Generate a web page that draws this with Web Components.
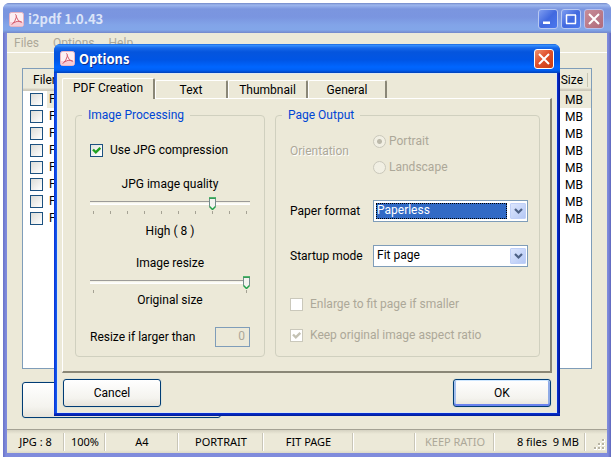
<!DOCTYPE html>
<html lang="en">
<head>
<meta charset="utf-8">
<title>i2pdf 1.0.43</title>
<style>
html,body{margin:0;background:#fff}
body{font:12px/14px Roboto,"Liberation Sans",sans-serif;color:#000;--face:#ece9d8;--dim:#aca899;--edge:#7f9db9}
</style>
</head>
<body>
<i2-app></i2-app>
<script>
function define(name, html, setup) {
  const t = document.createElement('template');
  t.innerHTML = '<style>*{box-sizing:border-box}:host{box-sizing:border-box}button,input,select{font:inherit;color:inherit;margin:0}</style>' + html;
  customElements.define(name, class extends HTMLElement {
    constructor() {
      super();
      this.attachShadow({mode: 'open'}).append(t.content.cloneNode(true));
    }
    connectedCallback() {
      if (!this.ready) { this.ready = true; if (setup) setup(this, this.shadowRoot); }
    }
  });
}

define('pdf-logo', `<style>:host{display:block;width:15px;height:15px;flex:none}svg{display:block}</style>
<svg width="15" height="15" viewBox="0 0 15 15" aria-hidden="true"><rect x=".5" y=".5" width="14" height="14" rx="2" fill="#fdeff2" stroke="#e9b4c1"/><path d="M1 10h13v3a1 1 0 0 1-1 1H2a1 1 0 0 1-1-1z" fill="#f7ccd6"/><path d="M6.600 2.500q1 0 .8 2.500Q6.500 9.300 3 12.500M7.300 5q1.200 4.200 5 5.500M4.300 10.800q3.500-2.500 8-1.200" fill="none" stroke="#d65f70" stroke-width="1" stroke-linecap="round"/></svg>`);

define('title-button', `<style>:host{display:block;flex:none}
button{display:grid;place-items:center;width:20px;height:20px;padding:0;border:1px solid #fff;border-radius:3px;background:linear-gradient(135deg,#f0916f,#e0502c 45%,#c63c14)}
:host([tone=blue]) button{border-color:#b7c8f2;background:linear-gradient(135deg,#7e9df0,#4169df 50%,#4a78ee)}
:host([tone=dull]) button{border-color:#b7c0ee;background:linear-gradient(135deg,#c78d98,#b06a7c)}
svg{display:block}path{fill:none;stroke:#fff;stroke-width:2}</style>
<button type="button"><svg width="14" height="14" viewBox="0 0 14 14"><path/></svg></button>`, (h, r) => {
  const k = h.getAttribute('kind');
  r.querySelector('path').setAttribute('d', {min: 'M2 11h7M2 10.500h7', max: 'M2 3h10M2.500 3v8.500M11.500 3v8.500M2 11.500h10', close: 'M2 2l10 10M12 2l-10 10'}[k]);
  r.querySelector('button').setAttribute('aria-label', {min: 'Minimize', max: 'Maximize', close: 'Close'}[k]);
  if (k === 'max') r.querySelector('path').style.strokeWidth = '1.500';
});

define('title-bar', `<style>:host{display:flex;align-items:center;gap:4px;height:29px;padding:0 6px;color:#fff;font:bold 13px/16px "Noto Sans CJK JP",Verdana,sans-serif;background:linear-gradient(#0a53cf 0,#3a94ff 1px,#1668ea 4px,#0555dd 8px,#0055e5 16px,#0066ff 23px,#0060f5 26px,#0040b8 29px);border-radius:6px 6px 0 0;text-shadow:1px 1px #10308c}
:host([inactive]){height:30px;padding:2px 7px 0 6px;color:#dbe4f8;text-shadow:none;background:linear-gradient(#7288c8 0,#9db7ee 2px,#7b96df 6px,#7a95e0 14px,#82a4e8 22px,#82a6e9 27px,#7387ca 30px)}
.t{flex:1}.b{display:flex;gap:3px}</style>
<pdf-logo></pdf-logo><span class="t"><slot></slot></span><div class="b"><slot name="buttons"></slot></div>`);

define('menu-bar', `<style>:host{display:flex;height:20px;align-items:center;gap:14px;padding:0 7px;color:var(--dim);border-bottom:1px solid #fff}
button{border:0;background:none;padding:0}</style>
<button type="button">Files</button><button type="button">Options</button><button type="button">Help</button>`);

define('check-box', `<style>:host{display:block}
label{display:flex;align-items:center;gap:7px}
input{appearance:none;width:13px;height:13px;flex:none;border:1px solid #1c5180;background:linear-gradient(135deg,#dcdcd7,#fff)}
input:checked{background:url("data:image/svg+xml,%3Csvg xmlns='http://www.w3.org/2000/svg' width='11' height='11'%3E%3Cpath d='M2 4.500l2.800 2.800 4.500-4.500' fill='none' stroke='%2321a121' stroke-width='2.400'/%3E%3C/svg%3E"),linear-gradient(135deg,#e4e4df,#fff)}
input:disabled{border-color:#cac8bb;background:#fff}
input:checked:disabled{background:url("data:image/svg+xml,%3Csvg xmlns='http://www.w3.org/2000/svg' width='11' height='11'%3E%3Cpath d='M2 4.500l2.800 2.800 4.500-4.500' fill='none' stroke='%23c4c2b4' stroke-width='2.400'/%3E%3C/svg%3E") #fff}
:host([disabled]){color:var(--dim)}</style>
<label><input type="checkbox"><span><slot></slot></span></label>`, (h, r) => {
  const i = r.querySelector('input');
  i.checked = h.hasAttribute('checked');
  i.disabled = h.hasAttribute('disabled');
});

define('file-table', `<style>:host{display:block;flex:1;border:1px solid var(--edge);background:#fff}
table{width:100%;border-collapse:collapse;table-layout:fixed}
th{height:22px;padding:0;font-weight:normal;text-align:left;background:linear-gradient(#ebeadb 19px,#d6d2c2 20px,#cbc7b8 22px)}
th:first-child{padding-left:10px}
th:last-child,td:last-child{width:80px;text-align:right;padding:0 8px 0 0}
th:last-child{background:linear-gradient(#c7c5b2,#c7c5b2) calc(100% - 3px) 4px/1px 14px no-repeat,linear-gradient(#ebeadb 19px,#d6d2c2 20px,#cbc7b8 22px)}
td{height:17px;padding:0 0 0 7px}
td label{display:flex;align-items:center;gap:4px}
td input{appearance:none;width:13px;height:13px;border:1px solid #1c5180;background:linear-gradient(135deg,#dcdcd7,#fff)}
td span{flex:1;line-height:17px;padding-left:2px}
tr.on span,tr.on td:last-child{background:#ece9d8}</style>
<table><thead><tr><th>Filen</th><th>Size</th></tr></thead><tbody></tbody></table>`, (h, r) => {
  const b = r.querySelector('tbody');
  for (let n = 0; n < 8; n++) {
    const tr = b.insertRow();
    if (!n) tr.className = 'on';
    tr.innerHTML = '<td><label><input type="checkbox"><span>F</span></label></td><td>MB</td>';
  }
});

define('status-bar', `<style>:host{display:grid;grid-template-columns:58fr 41fr 73fr 85fr 90fr 62fr 79fr 91fr 21fr;height:24px;padding:3px 0 2px;border-top:1px solid #a5a294;font:11px/18px "Noto Sans","Open Sans",Tahoma,sans-serif;background:linear-gradient(#d5d2c2,var(--face) 4px,var(--face) 20px,#dcd9c8)}
span{text-align:center;white-space:nowrap;border-right:1px solid #fff;box-shadow:inset -1px 0 #c9c6b7}
.d{color:var(--dim)}.r{text-align:right;padding-right:6px;white-space:pre}
svg{align-self:end;justify-self:end;display:block}</style>
<span>JPG : 8</span><span>100%</span><span>A4</span><span>PORTRAIT</span><span>FIT PAGE</span><span></span><span class="d">KEEP RATIO</span><span class="r">8 files  9 MB</span>
<svg width="13" height="13" viewBox="0 0 13 13" aria-hidden="true"><path d="M8 1h3v3H8zM4 5h3v3H4zM8 5h3v3H8zM0 9h3v3H0zM4 9h3v3H4zM8 9h3v3H8z" fill="#fff"/><path d="M8 1h2v2H8zM4 5h2v2H4zM8 5h2v2H8zM0 9h2v2H0zM4 9h2v2H4zM8 9h2v2H8z" fill="#b8b4a3"/></svg>`);

define('push-button', `<style>:host{display:block}
button{display:block;width:100%;height:100%;min-height:28px;padding:0;border:1px solid #003c74;border-radius:3px;background:linear-gradient(#fff,#f4f3ee 70%,#e6e3da);box-shadow:0 0 0 1px #dfe3d8}
:host([default]) button{box-shadow:0 0 0 1px #dfe3d8,inset 0 1px #cee7ff,inset 0 -2px #6982ee,inset 2px 0 #a5c0ee,inset -2px 0 #8fabe6}</style>
<button type="button"><slot></slot></button>`, (h, r) => {
  if (h.title) r.querySelector('button').setAttribute('aria-label', h.title);
});

define('group-box', `<style>:host{display:grid}
fieldset{min-width:0;margin:0;padding:0 11px 9px 14px;border:1px solid #d0d0bf;border-radius:4px}
legend{margin-left:-8px;padding:0 6px;line-height:14px;color:#0046d5}</style>
<fieldset><legend></legend><slot></slot></fieldset>`, (h, r) => {
  r.querySelector('legend').textContent = h.getAttribute('label');
});

define('track-bar', `<style>:host{display:grid;justify-items:center}
label,output{line-height:14px}
output{margin-top:10px}
input{appearance:none;width:100%;height:14px;margin-top:5px;background:linear-gradient(#9d9c99 1px,#efedde 1px,#fff 3px) 0 5px/100% 4px no-repeat;border-radius:2px}
input::-webkit-slider-thumb{appearance:none;width:7px;height:13px;background:url("data:image/svg+xml,%3Csvg xmlns='http://www.w3.org/2000/svg' width='7' height='13'%3E%3Cpath d='M.5 1.500h6v8l-3 3-3-3z' fill='%23f3f3ef' stroke='%23748c8c'/%3E%3Cpath d='M0 1h7M.5 9.500l3 3 3-3' fill='none' stroke='%2321a14a' stroke-width='1.500'/%3E%3C/svg%3E")}
.ticks{display:flex;justify-content:space-between;width:100%;padding:0 3px;height:3px;margin-top:1px}
.ticks i{width:1px;background:#a5a294}
:host([compact]) output{margin-top:0}</style>
<label for="r"></label><input id="r" type="range"><div class="ticks"></div><output for="r"></output>`, (h, r) => {
  const i = r.querySelector('input');
  i.min = h.getAttribute('min'); i.max = h.getAttribute('max'); i.value = h.getAttribute('value');
  r.querySelector('label').textContent = h.getAttribute('label');
  r.querySelector('output').textContent = h.getAttribute('text');
  for (let n = +i.min; n <= +i.max; n++) r.querySelector('.ticks').append(document.createElement('i'));
});

define('combo-field', `<style>:host{display:grid;grid-template-columns:83px 1fr;align-items:center}
.box{display:flex;gap:3px;height:22px;padding:2px 1px 2px 2px;border:1px solid var(--edge);background:#fff}
select{appearance:none;flex:1;min-width:0;border:0;padding:0 0 2px 1px;background:#fff;outline:0;line-height:14px}
:host([active]) select{background:#316ac5;color:#fff;outline:1px dotted #000;outline-offset:-1px}
button{width:16px;padding:0;border:1px solid #c0d0f8;border-radius:1px;background:linear-gradient(135deg,#dce6fd,#b5c8f5);display:grid;place-items:center}
svg{display:block}</style>
<label for="s"></label><div class="box"><select id="s"></select><button type="button" tabindex="-1" aria-label="Open list"><svg width="9" height="7" viewBox="0 0 9 7"><path d="M1 1l3.500 3.500L8 1" fill="none" stroke="#4d6185" stroke-width="2.200"/></svg></button></div>`, (h, r) => {
  r.querySelector('label').textContent = h.getAttribute('label');
  const s = r.querySelector('select');
  s.add(new Option(h.getAttribute('value')));
  r.querySelector('button').onclick = () => s.showPicker();
});

define('orientation-field', `<style>:host{display:grid;grid-template-columns:83px 1fr;align-items:center;color:var(--dim)}
#o{text-shadow:1px 1px #fff;padding-bottom:6px}
.set{display:grid;gap:12px}
label{display:flex;align-items:center;gap:3px}
input{appearance:none;width:13px;height:13px;border:1px solid #cac8bb;border-radius:50%;background:#f1efe3;flex:none}
input:checked{background:radial-gradient(circle,#bcb9aa 2px,#f1efe3 3px)}</style>
<span id="o">Orientation</span><div class="set" role="radiogroup" aria-labelledby="o"><label><input type="radio" name="o" checked disabled>Portrait</label><label><input type="radio" name="o" disabled>Landscape</label></div>`);

define('size-field', `<style>:host{display:flex;align-items:center;justify-content:space-between}
input{width:35px;height:20px;padding:0 4px 2px 0;text-align:right;border:1px solid var(--edge);background:var(--face);color:var(--dim)}</style>
<label for="n">Resize if larger than</label><input id="n" value="0" disabled>`);

define('tab-strip', `<style>:host{display:flex;align-items:end;position:relative;margin-bottom:-1px}
button{height:18px;padding:1px 0 0;border:0;border-top:1px solid #fff;border-left:1px solid #fff;border-right:2px solid #8a8777;border-radius:2px 2px 0 0;background:var(--face);margin-bottom:1px}
button[aria-selected=true]{height:21px;padding:0 0 2px;margin:0}</style>
<div role="tablist" style="display:contents"><button role="tab" aria-selected="true" style="width:93px">PDF Creation</button><button role="tab" style="width:73px">Text</button><button role="tab" style="width:80px">Thumbnail</button><button role="tab" style="width:79px">General</button></div>`);

define('options-dialog', `<style>:host{display:block;border-radius:7px 7px 0 0;background:linear-gradient(#0000 calc(100% - 3px),#0831d9 calc(100% - 3px),#001c95),linear-gradient(90deg,#0831d9,#1560ee 3px,#0831d9 calc(100% - 3px),#00138c)}
.client{margin:0 3px 3px;padding:5px 5px 6px;background:var(--face);box-shadow:inset 0 0 0 1px #dfe8f0}
.panel{display:grid;grid-template-columns:190fr 265fr;gap:10px;padding:9px 10px 14px 12px;border:1px solid #fff;border-right:2px solid #8a8777;border-bottom:2px solid #8a8777}
.col{display:grid;justify-content:stretch}
.left{padding:21px 3px 0 0}
.right{padding:12px 0 0}
.foot{display:flex;justify-content:space-between;padding:6px 1px 0}
.foot push-button{width:98px}
.q{margin-top:20px}.z{margin-top:18px}.n{margin-top:20px}
.p{margin-top:26px}.s{margin-top:23px}.e{margin-top:30px}.k{margin-top:17px}</style>
<title-bar>Options<title-button slot="buttons" kind="close"></title-button></title-bar>
<div class="client">
<tab-strip></tab-strip>
<div class="panel" role="tabpanel">
<group-box label="Image Processing"><div class="col left">
<check-box checked>Use JPG compression</check-box>
<track-bar class="q" label="JPG image quality" text="High ( 8 )" min="1" max="10" value="8"></track-bar>
<track-bar class="z" compact label="Image resize" text="Original size" min="0" max="1" value="1"></track-bar>
<size-field class="n"></size-field>
</div></group-box>
<group-box label="Page Output"><div class="col right">
<orientation-field></orientation-field>
<combo-field class="p" label="Paper format" value="Paperless" active></combo-field>
<combo-field class="s" label="Startup mode" value="Fit page"></combo-field>
<check-box class="e" disabled>Enlarge to fit page if smaller</check-box>
<check-box class="k" checked disabled>Keep original image aspect ratio</check-box>
</div></group-box>
</div>
<div class="foot"><push-button>Cancel</push-button><push-button default>OK</push-button></div>
</div>`);

define('i2-app', `<style>:host{display:flex;min-height:100vh;padding:3px 3px 4px;position:relative}
.win{flex:1;display:flex;flex-direction:column;border-radius:7px 7px 0 0;background:linear-gradient(90deg,#6a73c8,#7f8bdc 3px,#7f8bdc calc(100% - 3px),#5f68bd)}
.client{flex:1;display:flex;flex-direction:column;margin:0 4px 4px;background:var(--face)}
.body{flex:1;display:flex;flex-direction:column;gap:13px;padding:15px 15px 11px}
.go{width:199px;height:36px}
options-dialog{position:absolute;left:54px;right:54px;top:44px}</style>
<div class="win">
<title-bar inactive>i2pdf 1.0.43<title-button slot="buttons" kind="min" tone="blue"></title-button><title-button slot="buttons" kind="max" tone="blue"></title-button><title-button slot="buttons" kind="close" tone="dull"></title-button></title-bar>
<div class="client"><menu-bar></menu-bar>
<div class="body"><file-table></file-table><push-button class="go" title="Create"></push-button></div>
<status-bar></status-bar></div>
</div>
<options-dialog role="dialog" aria-label="Options"></options-dialog>`);
</script>
</body>
</html>
